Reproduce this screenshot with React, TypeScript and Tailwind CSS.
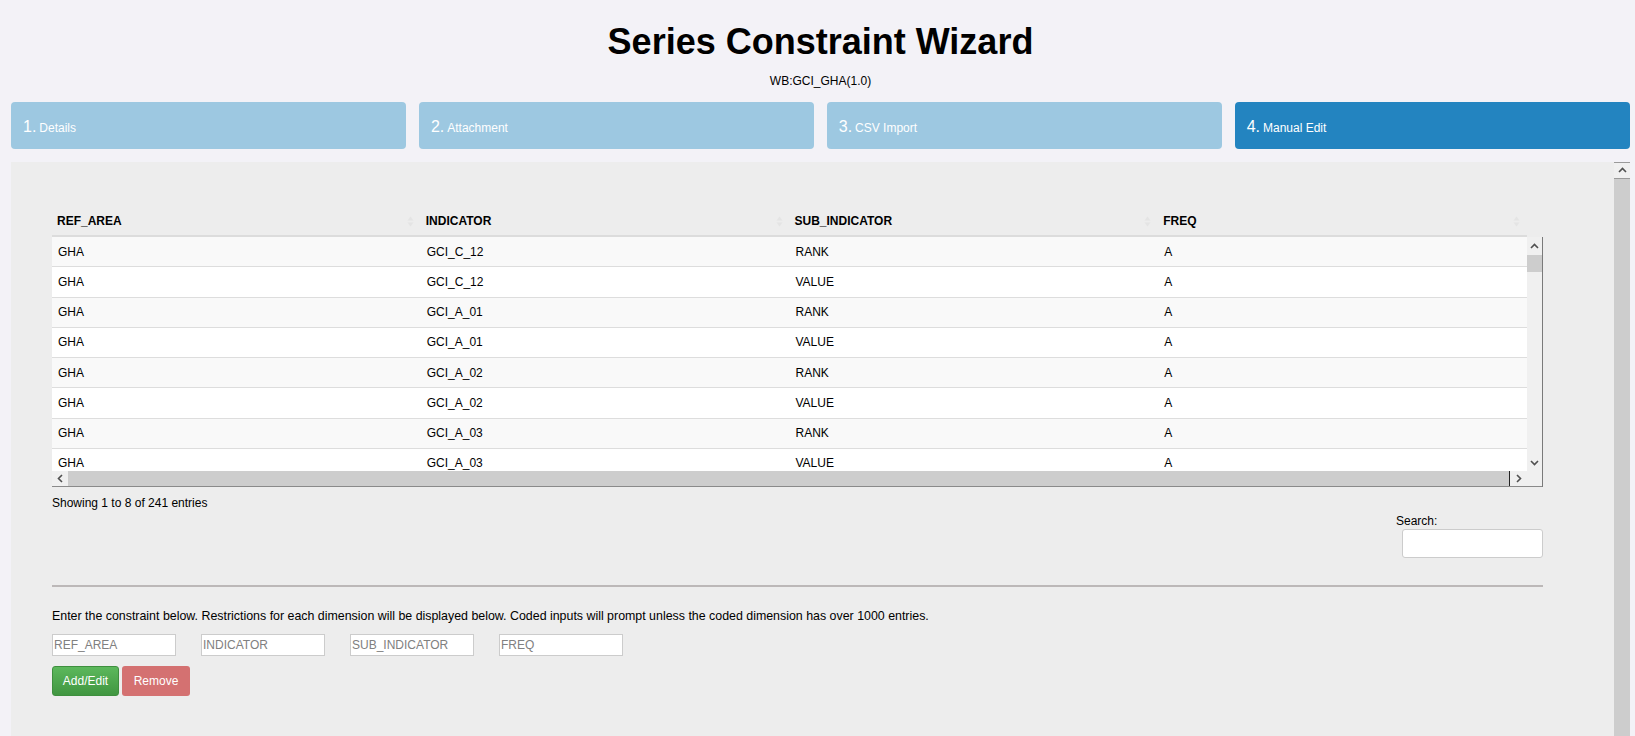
import React from 'react';

type Row = { area: string; indicator: string; sub: string; freq: string };

const rows: Row[] = [
  { area: 'GHA', indicator: 'GCI_C_12', sub: 'RANK', freq: 'A' },
  { area: 'GHA', indicator: 'GCI_C_12', sub: 'VALUE', freq: 'A' },
  { area: 'GHA', indicator: 'GCI_A_01', sub: 'RANK', freq: 'A' },
  { area: 'GHA', indicator: 'GCI_A_01', sub: 'VALUE', freq: 'A' },
  { area: 'GHA', indicator: 'GCI_A_02', sub: 'RANK', freq: 'A' },
  { area: 'GHA', indicator: 'GCI_A_02', sub: 'VALUE', freq: 'A' },
  { area: 'GHA', indicator: 'GCI_A_03', sub: 'RANK', freq: 'A' },
  { area: 'GHA', indicator: 'GCI_A_03', sub: 'VALUE', freq: 'A' },
];

const steps = ['Details', 'Attachment', 'CSV Import', 'Manual Edit'];
const columns = ['REF_AREA', 'INDICATOR', 'SUB_INDICATOR', 'FREQ'];

// small chevron used by the fake scrollbars
function Chevron({ dir }: { dir: 'up' | 'down' | 'left' | 'right' }) {
  const pts = {
    up: '1,6 4.5,2.5 8,6',
    down: '1,3 4.5,6.5 8,3',
    left: '6,1 2.5,4.5 6,8',
    right: '3,1 6.5,4.5 3,8',
  }[dir];
  return (
    <svg width="9" height="9" viewBox="0 0 9 9">
      <polyline points={pts} fill="none" stroke="#505050" strokeWidth="1.6" />
    </svg>
  );
}

function SortIcon() {
  return (
    <svg width="7" height="11" viewBox="0 0 7 11">
      <path d="M3.5 0.5 L6.5 4.5 L0.5 4.5 Z" fill="#e4e4e4" />
      <path d="M3.5 10.5 L6.5 6.5 L0.5 6.5 Z" fill="#e4e4e4" />
    </svg>
  );
}

export default function App() {
  return (
    <div
      className="h-[736px] overflow-hidden bg-[#f3f2f7] text-[#222] pl-[11px] pr-[5px]"
      style={{ fontFamily: '"Liberation Sans", Arial, sans-serif' }}
    >
      {/* header */}
      <h1 className="mt-[22px] text-center text-[36px] leading-[40px] font-bold text-black">
        Series Constraint Wizard
      </h1>
      <div className="mt-[11px] text-center text-[12px] leading-[16px] text-black">WB:GCI_GHA(1.0)</div>

      {/* wizard steps */}
      <div className="mt-[13px] grid grid-cols-4 gap-[12.5px]">
        {steps.map((s, i) => (
          <div
            key={s}
            className={`h-[47px] rounded-[4px] flex items-center pl-[12px] pt-[3px] text-white ${
              i === 3 ? 'bg-[#2384c0]' : 'bg-[#9dc8e1]'
            }`}
          >
            <span className="text-[16px] leading-[18px]">{i + 1}.</span>
            <span className="ml-[3px] text-[12px] leading-[18px] pt-[2px]">{s}</span>
          </div>
        ))}
      </div>

      {/* main panel */}
      <div className="mt-[13px] flex bg-[#ededed] h-[600px]">
        <div className="flex-1 pl-[41px] pt-[45px]">
          <div className="w-[1491px]">
            {/* table header */}
            <div className="w-[1475px] grid grid-cols-4 h-[30px] border-b-2 border-[#dcdcdc]">
              {columns.map((c) => (
                <div key={c} className="flex items-center justify-between pl-[5px] pr-[7px] text-[12px] font-bold text-black">
                  <span>{c}</span>
                  <SortIcon />
                </div>
              ))}
            </div>

            {/* table body + scrollbars */}
            <div className="flex">
              <div className="w-[1475px]">
                <div className="h-[234px] overflow-hidden">
                  {rows.map((r, i) => (
                    <div
                      key={i}
                      className={`grid grid-cols-4 h-[30.25px] border-b border-[#dddddd] text-[12px] text-black ${
                        i % 2 === 0 ? 'bg-[#f9f9f9]' : 'bg-white'
                      }`}
                    >
                      {[r.area, r.indicator, r.sub, r.freq].map((v, j) => (
                        <div key={j} className="flex items-center pl-[6px]">
                          {v}
                        </div>
                      ))}
                    </div>
                  ))}
                </div>
                <div className="h-[16px] flex border-b border-[#8a8a8a]">
                  <div className="w-[16px] bg-[#f0f0f0] flex items-center justify-center">
                    <Chevron dir="left" />
                  </div>
                  <div className="flex-1 bg-[#cdcdcd] border-r border-[#222]" />
                  <div className="w-[17px] bg-[#f0f0f0] flex items-center justify-center">
                    <Chevron dir="right" />
                  </div>
                </div>
              </div>
              <div className="w-[16px] h-[250px] flex flex-col bg-[#f0f0f0] border-r border-[#7a7a7a]">
                <div className="h-[18px] flex items-center justify-center">
                  <Chevron dir="up" />
                </div>
                <div className="h-[17px] bg-[#cdcdcd]" />
                <div className="flex-1" />
                <div className="h-[18px] flex items-center justify-center">
                  <Chevron dir="down" />
                </div>
                <div className="h-[16px] border-b border-[#8a8a8a]" />
              </div>
            </div>

            {/* info + search */}
            <div className="pt-[8px] text-[12px] leading-[16px] text-black">Showing 1 to 8 of 241 entries</div>
            <div className="mt-[2px] flex justify-end">
              <div className="w-[147px] flex flex-col">
                <span className="text-[12px] leading-[16px] text-black">Search:</span>
                <input
                  type="text"
                  className="ml-[6px] h-[29px] w-[141px] bg-white border border-[#cccccc] rounded-[3px] outline-none"
                />
              </div>
            </div>

            <div className="mt-[27px] h-[2px] bg-[#bcb8b8]" />

            {/* constraint entry */}
            <p className="mt-[21px] text-[12.4px] leading-[16px] text-black">
              Enter the constraint below. Restrictions for each dimension will be displayed below. Coded inputs will prompt
              unless the coded dimension has over 1000 entries.
            </p>
            <div className="mt-[10px] flex gap-[25px]">
              {columns.map((c) => (
                <input
                  key={c}
                  type="text"
                  placeholder={c}
                  className="w-[124px] h-[22px] bg-white border border-[#cccccc] px-[1px] text-[12px] placeholder:text-[#808080] outline-none"
                />
              ))}
            </div>
            <div className="mt-[10px] flex gap-[3px]">
              <button className="h-[30px] w-[67px] rounded-[3px] border border-[#3e8f3e] bg-gradient-to-b from-[#5cb85c] to-[#419641] text-[12px] text-white">
                Add/Edit
              </button>
              <button className="h-[30px] w-[68px] rounded-[3px] bg-[#d47171] text-[12px] text-white">Remove</button>
            </div>
          </div>
        </div>

        {/* panel scrollbar */}
        <div className="w-[16px] flex flex-col">
          <div className="h-[17px] bg-[#f0f0f0] border-t border-b border-[#9a9a9a] flex items-center justify-center">
            <Chevron dir="up" />
          </div>
          <div className="flex-1 bg-[#cdcdcd]" />
        </div>
      </div>
    </div>
  );
}
